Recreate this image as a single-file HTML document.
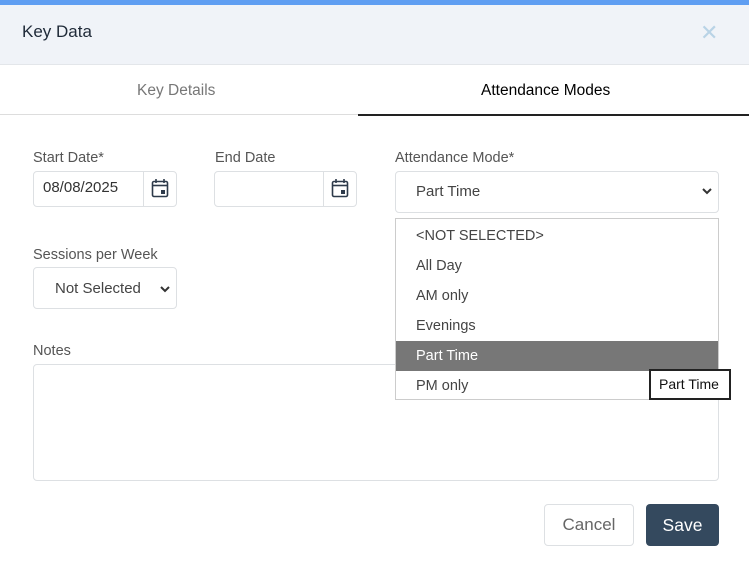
<!DOCTYPE html>
<html><head><style>
*{box-sizing:border-box;margin:0;padding:0}
body{width:749px;height:564px;overflow:hidden;background:#fff;font-family:"Liberation Sans",sans-serif;position:relative;color:#444}
.abs{position:absolute}
.top{left:0;top:0;width:749px;height:5px;background:#5f9ef2}
.hdr{left:0;top:5px;width:749px;height:60px;background:#f0f3f8;border-bottom:1px solid #e3e6ea}
.title{left:22px;top:22px;font-size:17px;color:#1f2a38}
.x{left:700px;top:20px;font-size:22px;color:#b9d3e6}
.tab{top:82px;font-size:15.5px}
.lbl{font-size:14.5px;color:#555}
.box{border:1px solid #dde0e3;border-radius:4px;background:#fff}
.dd div{height:30px;line-height:30px;padding-left:20px;font-size:14.5px;color:#444}
</style></head><body>
<div class="abs top"></div>
<div class="abs hdr"></div>
<div class="abs title">Key Data</div>
<div class="abs x">✕</div>
<div class="abs tab" style="left:137px;color:#777">Key Details</div>
<div class="abs tab" style="left:481px;color:#000">Attendance Modes</div>
<div class="abs" style="left:0;top:114px;width:358px;height:1px;background:#ddd"></div>
<div class="abs" style="left:358px;top:114px;width:391px;height:1.5px;background:#222"></div>

<div class="abs lbl" style="left:33px;top:150px">Start Date*</div>
<div class="abs box" style="left:33px;top:171px;width:144px;height:36px"></div>
<div class="abs" style="left:143px;top:171px;width:1px;height:36px;background:#dde0e3"></div>
<div class="abs" style="left:43px;top:179px;font-size:15px;color:#333">08/08/2025</div>
<svg class="abs" style="left:151px;top:178px" width="18" height="20" viewBox="0 0 18 20"><rect x="1.5" y="3.5" width="15" height="15" rx="1.5" fill="none" stroke="#2d3a4a" stroke-width="1.6"/><line x1="1.5" y1="7.5" x2="16.5" y2="7.5" stroke="#2d3a4a" stroke-width="1.6"/><line x1="5" y1="1" x2="5" y2="5" stroke="#2d3a4a" stroke-width="1.6"/><line x1="13" y1="1" x2="13" y2="5" stroke="#2d3a4a" stroke-width="1.6"/><rect x="10" y="12" width="4" height="4" fill="#2d3a4a"/></svg>

<div class="abs lbl" style="left:215px;top:150px">End Date</div>
<div class="abs box" style="left:214px;top:171px;width:143px;height:36px"></div>
<div class="abs" style="left:323px;top:171px;width:1px;height:36px;background:#dde0e3"></div>
<svg class="abs" style="left:331px;top:178px" width="18" height="20" viewBox="0 0 18 20"><rect x="1.5" y="3.5" width="15" height="15" rx="1.5" fill="none" stroke="#2d3a4a" stroke-width="1.6"/><line x1="1.5" y1="7.5" x2="16.5" y2="7.5" stroke="#2d3a4a" stroke-width="1.6"/><line x1="5" y1="1" x2="5" y2="5" stroke="#2d3a4a" stroke-width="1.6"/><line x1="13" y1="1" x2="13" y2="5" stroke="#2d3a4a" stroke-width="1.6"/><rect x="10" y="12" width="4" height="4" fill="#2d3a4a"/></svg>

<div class="abs lbl" style="left:33px;top:343px">Notes</div>
<div class="abs box" style="left:33px;top:364px;width:686px;height:117px"></div>

<div class="abs lbl" style="left:395px;top:150px">Attendance Mode*</div>
<div class="abs box" style="left:395px;top:171px;width:324px;height:42px"></div>
<div class="abs" style="left:416px;top:183px;font-size:15px;color:#444">Part Time</div>
<svg class="abs" style="left:701px;top:186px" width="12" height="10" viewBox="0 0 12 10"><path d="M2 3 L6 7 L10 3" fill="none" stroke="#333" stroke-width="2"/></svg>

<div class="abs dd" style="left:395px;top:218px;width:324px;height:182px;border:1px solid #ccc;background:#fff;padding-top:2px">
<div>&lt;NOT SELECTED&gt;</div><div>All Day</div><div>AM only</div><div>Evenings</div>
<div style="background:#777;color:#fff">Part Time</div><div>PM only</div>
</div>
<div class="abs" style="left:649px;top:369px;width:82px;height:31px;border:2px solid #222;background:#fff;font-size:14px;color:#111;line-height:27px;padding-left:8px">Part Time</div>

<div class="abs lbl" style="left:33px;top:247px">Sessions per Week</div>
<div class="abs box" style="left:33px;top:267px;width:144px;height:42px"></div>
<div class="abs" style="left:55px;top:280px;font-size:15px;color:#444;width:86px;overflow:hidden;white-space:nowrap">Not Selected</div>
<svg class="abs" style="left:159px;top:284px" width="12" height="10" viewBox="0 0 12 10"><path d="M2 3 L6 7 L10 3" fill="none" stroke="#333" stroke-width="2"/></svg>

<div class="abs box" style="left:544px;top:504px;width:90px;height:42px;font-size:17px;color:#666;text-align:center;line-height:40px">Cancel</div>
<div class="abs" style="left:646px;top:504px;width:73px;height:42px;background:#34495e;border-radius:4px;color:#fff;font-size:17.5px;text-align:center;line-height:42px">Save</div>
</body></html>
